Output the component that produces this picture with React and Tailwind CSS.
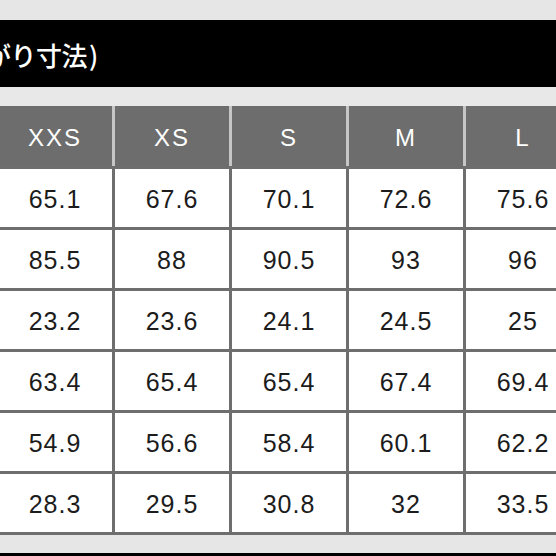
const header = ["XXS", "XS", "S", "M", "L"];
const rows = [
  ["65.1", "67.6", "70.1", "72.6", "75.6"],
  ["85.5", "88", "90.5", "93", "96"],
  ["23.2", "23.6", "24.1", "24.5", "25"],
  ["63.4", "65.4", "65.4", "67.4", "69.4"],
  ["54.9", "56.6", "58.4", "60.1", "62.2"],
  ["28.3", "29.5", "30.8", "32", "33.5"],
];

export default function App() {
  return (
    <div className="w-[556px] h-[556px] overflow-hidden bg-[#e7e7e7] flex flex-col font-['Liberation_Sans',Arial,sans-serif]">
      <div className="h-[20px] shrink-0 bg-[#e6e6e6]" />
      <div className="h-[67px] shrink-0 bg-black flex items-center overflow-hidden">
        <span className="-ml-[15px] mt-[2px] text-white text-[26px] font-medium tracking-[-0.5px] font-['Noto_Sans_CJK_JP',sans-serif] whitespace-nowrap leading-none">
          がり寸法<span className="ml-[2px]">)</span>
        </span>
      </div>
      <div className="h-[19px] shrink-0 bg-[#e8e8e8]" />
      <div className="h-[60px] shrink-0 -ml-[2px] w-max grid grid-cols-[repeat(5,114px)] gap-x-[3px] bg-[#c6c6c6]">
        {header.map((h) => (
          <div key={h} className="bg-[#6d6d6d] flex items-center justify-center pt-[3px] text-white text-[24px] tracking-[2px]">
            {h}
          </div>
        ))}
      </div>
      <div className="shrink-0 flex flex-col gap-y-[3px] py-[3px] bg-[#6e6e6e]">
        {rows.map((r, i) => (
          <div key={i} className="h-[58px] -ml-[2px] w-max grid grid-cols-[repeat(5,114px)] gap-x-[3px] bg-[#6e6e6e]">
            {r.map((v, j) => (
              <div key={j} className="bg-white flex items-center justify-center pt-[3px] text-[#1c1c1c] text-[25px] tracking-[1px]">
                {v}
              </div>
            ))}
          </div>
        ))}
      </div>
      <div className="h-[18px] shrink-0 bg-[#e6e6e6]" />
      <div className="h-[3px] shrink-0 bg-black" />
    </div>
  );
}
